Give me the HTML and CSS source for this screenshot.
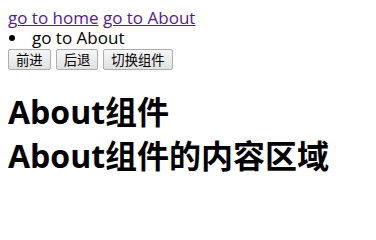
FILE: index.html
```html
<!DOCTYPE html>
<html lang="zh-CN">
<head>
<meta charset="utf-8">
<link rel="stylesheet" href="styles.css">
</head>
<body>
<div class="nav">
  <a href="#/home" class="link">go to home</a>
  <a href="#/about" class="link">go to About</a>
</div>
<ul class="list">
  <li class="item">go to About</li>
</ul>
<div class="actions">
  <button class="btn">前进</button>
  <button class="btn">后退</button>
  <button class="btn">切换组件</button>
</div>
<h1 class="title">About组件<br>About组件的内容区域</h1>
</body>
</html>
```
FILE: styles.css
```css
body {
  margin: 8px;
  font-family: "Open Sans", "Noto Sans CJK SC", sans-serif;
  font-size: 17px;
  line-height: 20px;
  color: #000;
  background: #fff;
}
.nav {
  line-height: 20px;
}
.link {
  color: #551a8b;
  text-decoration: underline;
}
.list {
  margin: 0;
  padding: 0;
  list-style: none;
  line-height: 20px;
}
.item {
  display: flex;
  align-items: center;
}
.item::before {
  content: "";
  width: 6px;
  height: 6px;
  border-radius: 50%;
  background: #000;
  margin-left: 1px;
  margin-right: 17px;
}
.actions {
  display: flex;
  gap: 5px;
  margin-top: 1px;
}
.btn {
  font-family: "Noto Sans CJK SC", sans-serif;
  font-size: 13.33px;
  line-height: 17px;
  padding: 1px 7px;
  border: 1px solid #adadad;
  border-radius: 2px;
  background: linear-gradient(#f6f6f6, #e1e1e1);
  color: #000;
}
.title {
  font-size: 32px;
  line-height: 44px;
  font-weight: bold;
  margin: 20px 0;
}
```
